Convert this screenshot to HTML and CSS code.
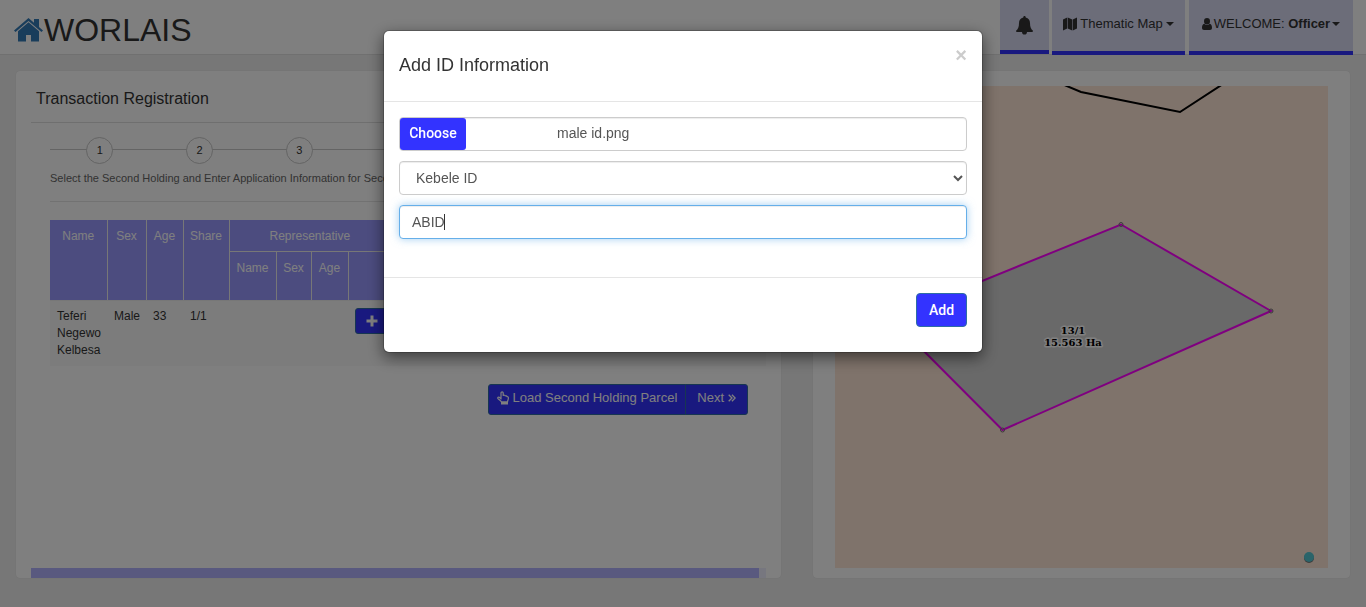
FILE: index.html
```html
<!DOCTYPE html>
<html lang="en">
<head>
<meta charset="utf-8">
<meta name="viewport" content="width=device-width, initial-scale=1">
<title>WORLAIS</title>
<link rel="stylesheet" href="styles.css">
</head>
<body>
<header class="topbar">
  <a class="brand" href="#">
    <svg class="brand-icon" viewBox="0 0 29 24" aria-hidden="true"><path fill="currentColor" d="M14.500 0 L20 4.800 V1 H25 V9 L29 12.500 L27.500 14 L14.500 3 L1.500 14 L0 12.500 Z M14.500 4.300 L25 13.200 V23.500 H17 V17 H12 V23.500 H4 V13.200 Z"/></svg>
    <span>WORLAIS</span>
  </a>
  <nav class="nav">
    <button class="nav-item nav-bell" type="button" aria-label="Notifications">
      <svg class="icon-bell" viewBox="0 0 17 19" aria-hidden="true"><path fill="currentColor" d="M8.500 0 C9.300 0 9.800 .6 9.700 1.500 C12.500 2 14 4.200 14 7 C14 11 15 13.300 17 14.700 C17 15.600 16.500 16 15.700 16 H11 C11 17.600 10 18.600 8.500 18.600 C7 18.600 6 17.600 6 16 H1.300 C.5 16 0 15.600 0 14.700 C2 13.300 3 11 3 7 C3 4.200 4.500 2 7.300 1.500 C7.200 .6 7.700 0 8.500 0 Z"/></svg>
    </button>
    <button class="nav-item nav-map" type="button">
      <svg class="icon-map" viewBox="0 0 14 14" aria-hidden="true"><path fill="currentColor" d="M0 2.500 L4.200 .5 V11.500 L0 13.500 Z M4.800 .5 L9.200 2.500 V13.500 L4.800 11.500 Z M9.800 2.500 L14 .5 V11.500 L9.800 13.500 Z"/></svg>
      <span>Thematic Map</span>
      <i class="caret"></i>
    </button>
    <button class="nav-item nav-user" type="button">
      <svg class="icon-user" viewBox="0 0 10 12" aria-hidden="true"><path fill="currentColor" d="M5 0 A3 3.200 0 0 1 5 6.400 A3 3.200 0 0 1 5 0 Z M2.300 5.700 C3.800 7.300 6.200 7.300 7.700 5.700 C9.500 6 10 8 10 9.700 C10 11 9.200 12 8 12 H2 C.8 12 0 11 0 9.700 C0 8 .5 6 2.300 5.700 Z"/></svg>
      <span>WELCOME: <b>Officer</b></span>
      <i class="caret"></i>
    </button>
  </nav>
</header>

<main class="columns">
  <section class="panel registration">
    <h1 class="panel-title">Transaction Registration</h1>
    <div class="wizard">
      <ol class="steps">
        <li><span>1</span></li><li><span>2</span></li><li><span>3</span></li><li><span>4</span></li><li><span>5</span></li><li><span>6</span></li><li><span>7</span></li>
      </ol>
      <p class="hint">Select the Second Holding and Enter Application Information for Second Holding</p>
      <div class="table-wrap">
        <table class="holders">
          <colgroup><col class="c-name"><col class="c-sex"><col class="c-age"><col class="c-share"><col class="c-rname"><col class="c-rsex"><col class="c-rage"><col></colgroup>
          <thead>
            <tr><th rowspan="2">Name</th><th rowspan="2">Sex</th><th rowspan="2">Age</th><th rowspan="2">Share</th><th class="rep" colspan="3">Representative</th><th class="rep-rest"></th></tr>
            <tr class="sub"><th>Name</th><th>Sex</th><th>Age</th><th></th></tr>
          </thead>
          <tbody>
            <tr><td>Teferi Negewo Kelbesa</td><td>Male</td><td>33</td><td>1/1</td><td></td><td></td><td></td>
              <td><button class="btn btn-plus" type="button" aria-label="Add ID"><svg class="icon-plus" viewBox="0 0 12 12" aria-hidden="true"><path fill="currentColor" d="M4.500 .5 H7.500 V4.500 H11.500 V7.500 H7.500 V11.500 H4.500 V7.500 H.5 V4.500 H4.500 Z"/></svg></button></td></tr>
          </tbody>
        </table>
      </div>
      <div class="actions">
        <button class="btn btn-load" type="button">
          <svg class="icon-hand" viewBox="0 0 12 14" aria-hidden="true"><path fill="none" stroke="currentColor" stroke-width="1.200" stroke-linejoin="round" d="M4 8.500 V2 C4 .5 6.200 .5 6.200 2 V4.500 C7 4 8 4.200 8.200 4.900 C9.200 4.500 9.800 5 10 5.700 C11 5.500 11.400 6 11.400 7 C11.400 8.800 10.500 9.500 10.500 11 H4.500 C4 9.500 2.300 9 1 7.600 C.3 6.500 1.600 5.600 2.600 6.500 L4 7.700"/><path fill="currentColor" d="M4 10.500 H11 V13.500 H4 Z"/></svg>
          <span>Load Second Holding Parcel</span>
        </button>
        <button class="btn btn-next" type="button">
          <span>Next</span>
          <svg class="icon-next" viewBox="0 0 8 8" aria-hidden="true"><path fill="none" stroke="currentColor" stroke-width="1.300" d="M.7 .7 L4 4 L.7 7.300 M3.900 .7 L7.200 4 L3.900 7.300"/></svg>
        </button>
      </div>
    </div>
    <div class="scroll-track"><div class="scroll-thumb"></div></div>
  </section>

  <section class="panel map-panel">
    <svg class="map" viewBox="0 0 493 482" role="img" aria-label="Parcel map">
      <path class="road" d="M227 -2 L246 6 L345 26 L388 -2"/>
      <path class="parcel" d="M286 138.500 L436 225 L167.500 344 L56 232 Z"/>
      <g class="vertices"><circle cx="286" cy="138.500" r="2"/><circle cx="436" cy="225" r="2"/><circle cx="167.500" cy="344" r="2"/></g>
      <text class="parcel-label" x="238" y="248">13/1</text>
      <text class="parcel-label" x="238" y="260">15.563 Ha</text>
      <circle class="marker-shade" cx="474" cy="472" r="5"/>
      <circle class="marker" cx="474" cy="471" r="5"/>
    </svg>
  </section>
</main>

<div class="overlay">
  <form class="dialog" role="dialog" aria-labelledby="dialog-title">
    <div class="dialog-head">
      <h2 class="dialog-title" id="dialog-title">Add ID Information</h2>
      <button class="close" type="button" aria-label="Close">×</button>
    </div>
    <div class="dialog-body">
      <label class="control file">
        <span class="choose">Choose</span>
        <input class="file-input" type="file" aria-label="ID file">
        <span class="file-name">male id.png</span>
      </label>
      <select class="control type" aria-label="ID type"><option>Kebele ID</option></select>
      <div class="id-field">
        <input class="control id-number" type="text" value="ABID" aria-label="ID number">
        <span class="text-cursor"></span>
      </div>
    </div>
    <div class="dialog-foot"><button class="btn btn-add" type="button">Add</button></div>
  </form>
</div>
</body>
</html>
```

FILE: styles.css
```css
* { box-sizing: border-box; }
body {
  margin: 0;
  min-height: 100vh;
  background: #efefef;
  color: #333;
  font: 12px/17px "Liberation Sans", Arial, sans-serif;
}
button, input, select { font: inherit; }

.topbar {
  display: flex;
  justify-content: space-between;
  height: 55px;
  padding: 0 13px 0 14px;
  background: #fff;
  border-bottom: 1px solid #e0e0e0;
}
.brand {
  display: flex;
  align-items: center;
  gap: 1px;
  padding-top: 6px;
  color: #333;
  font-size: 32px;
  line-height: 40px;
  text-decoration: none;
}
.brand-icon { width: 29px; height: 24px; color: #337ab7; }
.nav { display: flex; align-items: flex-start; gap: 4px; }
.nav-item {
  display: flex;
  align-items: center;
  justify-content: center;
  height: 55px;
  padding: 0 0 4px;
  border: 0;
  border-bottom: 4px solid #3333ff;
  background: #d8daf3;
  color: #333;
  font-size: 13px;
  line-height: 20px;
}
.nav-bell { width: 49px; height: 54px; margin-right: -1px; padding: 0; }
.nav-map { width: 133px; gap: 3px; }
.nav-user { width: 164px; gap: 2px; }
.icon-bell { width: 17px; height: 19px; }
.icon-map { width: 14px; height: 14px; }
.icon-user { width: 10px; height: 12px; }
.caret { border: 4px solid transparent; border-top-color: currentColor; border-bottom: 0; }

.columns {
  display: grid;
  grid-template-columns: minmax(0, 765fr) minmax(0, 537fr);
  gap: 32px;
  padding: 16px 16px 28px;
}
.panel { background: #fff; border-radius: 4px; box-shadow: 0 0 1px #ccc; }
.registration { display: flex; flex-direction: column; padding: 0 15px; }
.panel-title {
  margin: 0;
  padding: 17px 5px 12px;
  border-bottom: 1px solid #dedede;
  font-size: 16px;
  font-weight: 400;
  line-height: 22px;
}
.wizard { padding: 14px 18px 0 19px; }
.steps {
  display: grid;
  grid-template-columns: repeat(7, 1fr);
  margin: 0;
  padding: 0;
  list-style: none;
  background: linear-gradient(#c8c8c8, #c8c8c8) 0 12px / 100% 1px no-repeat;
}
.steps li { display: flex; justify-content: center; }
.steps span {
  width: 27px;
  height: 27px;
  border: 1px solid #c8c8c8;
  border-radius: 50%;
  background: #fff;
  font-size: 11px;
  line-height: 25px;
  text-align: center;
}
.hint {
  margin: 0;
  padding: 6px 0 14px;
  border-bottom: 1px solid #e5e5e5;
  color: #666;
  font-size: 11px;
  white-space: nowrap;
}
.table-wrap { margin: 18px -18px 0 0; }
.holders { width: 100%; table-layout: fixed; border-collapse: collapse; }
.c-name { width: 57px; }
.c-sex { width: 39px; }
.c-age { width: 37px; }
.c-share { width: 46px; }
.c-rname { width: 47px; }
.c-rsex { width: 35px; }
.c-rage { width: 37px; }
.holders th {
  height: 31px;
  padding: 8px 0 0;
  border: 1px solid #eee;
  border-top: 0;
  border-left: 0;
  background: #9999ff;
  color: #fff;
  font-weight: 400;
  text-align: center;
  vertical-align: top;
}
.holders th.rep { padding-left: 40px; border-right: 0; }
.holders .sub th { height: 49px; }
.holders td { height: 65px; padding: 7px 0 7px 7px; background: #f9f9f9; vertical-align: top; }

.btn {
  border: 1px solid #2e6da4;
  border-radius: 3px;
  background: #3333ff;
  color: #fff;
}
.btn-plus { display: block; width: 34px; height: 26px; padding: 0; }
.icon-plus { display: block; width: 12px; height: 12px; margin: 0 auto; }
.actions { display: flex; justify-content: flex-end; margin-top: 18px; }
.btn-load, .btn-next {
  display: flex;
  align-items: center;
  height: 31px;
  padding: 0 8px 3px;
  font-size: 13px;
  line-height: 18px;
}
.btn-load { gap: 3px; border-radius: 3px 0 0 3px; }
.btn-next { gap: 4px; margin-left: -1px; padding: 0 11px 3px; border-radius: 0 3px 3px 0; }
.icon-hand { width: 12px; height: 14px; }
.icon-next { width: 8px; height: 8px; }

.scroll-track { height: 10px; margin-top: auto; background: #eeeeff; }
.scroll-thumb { width: 99%; height: 10px; background: #b3b3ff; }

.map-panel { padding: 15px 22px 10px; }
.map { display: block; width: 100%; height: auto; background: #ffe6d6; }
.road { fill: none; stroke: #000; stroke-width: 2; }
.parcel { fill: #d3d3d3; stroke: #ff00ff; stroke-width: 2; }
.vertices { fill: none; stroke: #777; stroke-width: 1; }
.parcel-label {
  fill: #000;
  stroke: #fff;
  stroke-width: 3px;
  stroke-linejoin: round;
  paint-order: stroke;
  font: bold 10px "DejaVu Serif", serif;
  text-anchor: middle;
}
.marker { fill: #55c8d4; }
.marker-shade { fill: #777; }

.overlay {
  position: fixed;
  inset: 0;
  padding: 30px 15px;
  background: rgba(0, 0, 0, .5);
}
.dialog {
  max-width: 600px;
  margin: 0 auto;
  border: 1px solid rgba(0, 0, 0, .2);
  border-radius: 6px;
  background: #fff;
  background-clip: padding-box;
  box-shadow: 0 5px 15px rgba(0, 0, 0, .5);
  font-size: 14px;
  line-height: 20px;
}
.dialog-head {
  display: flex;
  justify-content: space-between;
  height: 71px;
  padding: 14px 15px;
  border-bottom: 1px solid #e5e5e5;
}
.dialog-title { margin: 8px 0 0; font-size: 18px; font-weight: 400; line-height: 24px; }
.close {
  height: 20px;
  padding: 0;
  border: 0;
  background: none;
  color: #ccc;
  font-size: 20px;
  font-weight: 700;
  line-height: 20px;
}
.dialog-body { display: grid; gap: 10px; padding: 15px 15px 38px; }
.control {
  width: 100%;
  height: 34px;
  border: 1px solid #ccc;
  border-radius: 4px;
  background: #fff;
  color: #555;
  box-shadow: inset 0 1px 1px rgba(0, 0, 0, .075);
}
.file { display: flex; align-items: stretch; }
.choose {
  width: 66px;
  border-radius: 3px;
  background: #3333ff;
  color: #fff;
  font-family: Roboto, sans-serif;
  font-weight: 500;
  line-height: 30px;
  text-align: center;
}
.file-input { width: 0; opacity: 0; }
.file-name { margin-left: 91px; line-height: 30px; }
.type { padding: 6px 12px; }
.id-field { position: relative; }
.id-number {
  display: block;
  padding: 6px 12px;
  border-color: #66afe9;
  outline: 0;
  box-shadow: inset 0 1px 1px rgba(0, 0, 0, .075), 0 0 8px rgba(102, 175, 233, .6);
}
.text-cursor { position: absolute; top: 9px; left: 45px; width: 1px; height: 16px; background: #333; }
.dialog-foot { display: flex; justify-content: flex-end; padding: 15px 15px 25px; border-top: 1px solid #e5e5e5; }
.btn-add { width: 51px; height: 34px; padding: 0; border-radius: 4px; font-family: Roboto, sans-serif; font-weight: 500; }
```
